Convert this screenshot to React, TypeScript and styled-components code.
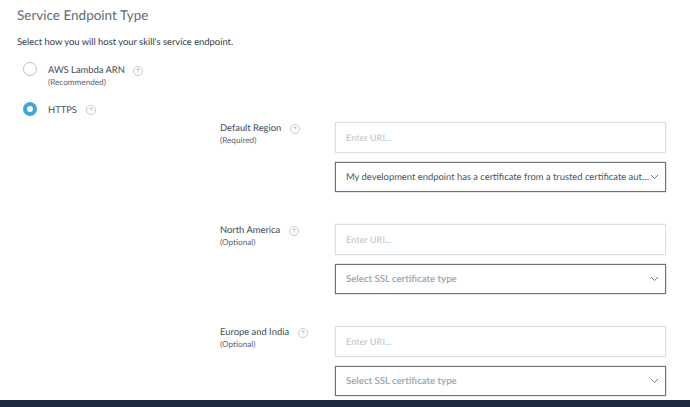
import React from "react";
import styled, { createGlobalStyle } from "styled-components";

const GlobalStyle = createGlobalStyle`
  html, body {
    margin: 0;
    height: 100%;
    overflow: hidden;
    background: #fff;
  }
  * {
    box-sizing: border-box;
  }
  body {
    font-family: "Lato", "Liberation Sans", sans-serif;
    color: #33414e;
    text-rendering: geometricPrecision;
  }
`;

const Page = styled.div`
  display: flex;
  flex-direction: column;
  height: 407px;
`;

const Main = styled.main`
  flex: 1;
  padding: 6px 24px 0 17px;
  overflow: hidden;
`;

const Title = styled.h2`
  margin: 0;
  font-size: 13.5px;
  line-height: 18px;
  font-weight: 400;
  color: #5f6b76;
`;

const Description = styled.p`
  margin: 12px 0 0;
  font-size: 9.4px;
  line-height: 14px;
  color: #2f3c48;
`;

const RadioRow = styled.div<{ $top: number }>`
  display: flex;
  align-items: flex-start;
  margin: ${({ $top }) => $top}px 0 0 6px;
`;

const Radio = styled.span<{ $checked?: boolean }>`
  flex: none;
  width: 14px;
  height: 14px;
  margin-top: 1px;
  border-radius: 50%;
  background: #fff;
  border: ${({ $checked }) => ($checked ? "4.5px solid #41a5dd" : "1px solid #b8c2c3")};
`;

const RadioText = styled.div`
  margin-left: 11px;
  padding-top: 3px;
`;

const LabelLine = styled.div<{ $gap: number }>`
  display: flex;
  align-items: flex-start;
  gap: ${({ $gap }) => $gap}px;
  font-size: 9.4px;
  line-height: 13px;
  color: #414d58;
`;

const Hint = styled.div`
  font-size: 8.2px;
  line-height: 11px;
  color: #57636e;
`;

const Help = styled.svg<{ $top: number }>`
  flex: none;
  width: 10px;
  height: 10px;
  margin-top: ${({ $top }) => $top}px;
`;

const Regions = styled.div`
  margin: 0 0 0 203px;
`;

const Region = styled.section`
  display: grid;
  grid-template-columns: 115px 331px;
  margin-bottom: 32px;
  &:first-child {
    margin-top: 5px;
  }
`;

const RegionLabel = styled.div``;

const Fields = styled.div`
  display: flex;
  flex-direction: column;
  gap: 9px;
`;

const UriInput = styled.div`
  height: 31px;
  padding: 0 10px;
  display: flex;
  align-items: center;
  border: 1px solid #dbe0e0;
  box-shadow: 0 0 1px #d5dbdb;
  font-size: 9.2px;
  color: #bcc3c8;
`;

const Select = styled.div<{ $empty?: boolean }>`
  height: 30px;
  padding: 0 6px 0 10px;
  display: flex;
  align-items: center;
  border: 1px solid #6d7478;
  box-shadow: 0 0 1px #6d7478;
  font-size: ${({ $empty }) => ($empty ? 9.6 : 9.4)}px;
  color: ${({ $empty }) => ($empty ? "#a2acb2" : "#48545e")};
  font-weight: ${({ $empty }) => ($empty ? 700 : 400)};
`;

const SelectText = styled.span`
  flex: 1;
  min-width: 0;
  overflow: hidden;
  white-space: nowrap;
  text-overflow: ellipsis;
`;

const Chevron = styled.svg`
  flex: none;
  width: 9px;
  height: 6px;
`;

const Footer = styled.footer`
  height: 7px;
  background: #1b2a3c;
`;

const HelpIcon: React.FC<{ top?: number }> = ({ top = 2 }) => (
  <Help $top={top} viewBox="0 0 11 11" fill="none">
    <circle cx="5.5" cy="5.5" r="5" stroke="#aab2b8" strokeWidth="0.7" />
    <path
      d="M4.2 4.3c0-.8.6-1.2 1.3-1.2s1.3.4 1.3 1.1c0 1-1.3 1-1.3 2"
      stroke="#8d979e"
      strokeWidth="0.7"
    />
    <circle cx="5.5" cy="7.8" r="0.4" fill="#8d979e" />
  </Help>
);

const ChevronIcon = () => (
  <Chevron viewBox="0 0 9 6" fill="none">
    <path d="M1 1l3.5 3.5L8 1" stroke="#4f5b65" strokeWidth="0.8" />
  </Chevron>
);

const regions = [
  {
    name: "Default Region",
    hint: "(Required)",
    value: "My development endpoint has a certificate from a trusted certificate authority",
  },
  { name: "North America", hint: "(Optional)" },
  { name: "Europe and India", hint: "(Optional)" },
];

export default function App() {
  return (
    <Page>
      <GlobalStyle />
      <Main>
        <Title>Service Endpoint Type</Title>
        <Description>Select how you will host your skill's service endpoint.</Description>

        <RadioRow $top={11}>
          <Radio />
          <RadioText>
            <LabelLine $gap={8}>
              AWS Lambda ARN
              <HelpIcon top={2} />
            </LabelLine>
            <Hint>(Recommended)</Hint>
          </RadioText>
        </RadioRow>

        <RadioRow $top={13}>
          <Radio $checked />
          <RadioText>
            <LabelLine $gap={9}>
              HTTPS
              <HelpIcon top={1} />
            </LabelLine>
          </RadioText>
        </RadioRow>

        <Regions>
          {regions.map((region) => (
            <Region key={region.name}>
              <RegionLabel>
                <LabelLine $gap={9}>
                  {region.name}
                  <HelpIcon top={1.5} />
                </LabelLine>
                <Hint>{region.hint}</Hint>
              </RegionLabel>
              <Fields>
                <UriInput>Enter URI...</UriInput>
                <Select $empty={!region.value}>
                  <SelectText>{region.value ?? "Select SSL certificate type"}</SelectText>
                  <ChevronIcon />
                </Select>
              </Fields>
            </Region>
          ))}
        </Regions>
      </Main>
      <Footer />
    </Page>
  );
}
